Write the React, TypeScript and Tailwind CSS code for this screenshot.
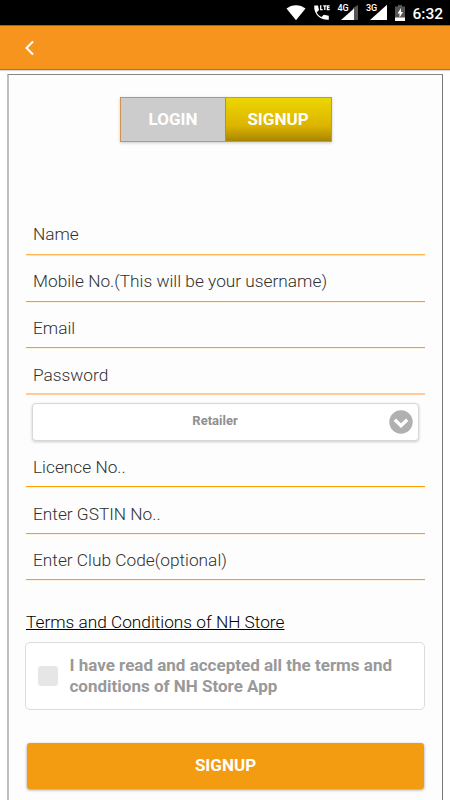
import React, { useState } from 'react';

interface Field {
  id: string;
  placeholder: string;
  type?: string;
  className: string;
}

const ACCOUNT_FIELDS: Field[] = [
  { id: 'name', placeholder: 'Name', className: 'h-[46px] pt-[4px] mb-px border-b border-[#ffb452] shadow-[0_1px_0_#ffe0b8]' },
  { id: 'mobile', placeholder: 'Mobile No.(This will be your username)', className: 'h-[46px] pt-[4px] border-b border-[#ffa000] shadow-[0_1px_0_#fff3e0]' },
  { id: 'email', placeholder: 'Email', className: 'h-[46px] pt-[6px] border-b border-[#ffa000] shadow-[0_1px_0_#fff3e0]' },
  { id: 'password', placeholder: 'Password', type: 'password', className: 'h-[47px] pt-[8px] border-b-2 border-[#ffcb9a]' },
];

const STORE_FIELDS: Field[] = [
  { id: 'licence', placeholder: 'Licence No..', className: 'h-[46px] pt-[6px] border-b border-[#ffa000] shadow-[0_1px_0_#fff3e0]' },
  { id: 'gstin', placeholder: 'Enter GSTIN No..', className: 'h-[47px] pt-[8px] border-b border-[#ffa000] shadow-[0_1px_0_#fff3e0]' },
  { id: 'club', placeholder: 'Enter Club Code(optional)', className: 'h-[46px] pt-[6px] border-b border-[#ffa000] shadow-[0_1px_0_#fff3e0]' },
];

const StatusBar = () => (
  <div className="h-[25px] bg-black shrink-0">
    <svg width="450" height="25" viewBox="0 0 450 25" fill="white">
      {/* Wifi */}
      <path d="M296 20.300 L286.500 8.600 C292 4 300 4 305.500 8.600 Z" />
      {/* LTE call */}
      <path d="M314.300 5.500 h3.700 l1 4.600 -2.300 2.300 c1.200 2.200 2.700 3.600 4.800 4.700 l2.300 -2.300 5 1 v4 c-8.500 .6 -15.500 -6 -14.500 -14.300z" />
      <path d="M320.700 5.300 v4.300 h2 M323.200 5.800 h3.200 M324.800 5.800 v4.200 M329.700 5.800 h-2.300 v3.800 h2.300 M327.400 7.700 h2" fill="none" stroke="white" strokeWidth="1.300" />
      {/* 4G */}
      <path d="M358 5 V20 H353 V8z" fill="#555" />
      <path d="M354 8.400 V20 H341 Z" />
      <text x="337.500" y="11" fontSize="9" fontWeight="500" fontFamily="Roboto" stroke="black" strokeWidth="2" paintOrder="stroke">4G</text>
      {/* 3G */}
      <path d="M387 4.800 V20 H370 Z" />
      <text x="366" y="11" fontSize="9" fontWeight="500" fontFamily="Roboto" stroke="black" strokeWidth="2" paintOrder="stroke">3G</text>
      {/* Battery */}
      <path d="M398 5 h4 v1.500 h3 V20.500 H395 V6.500 h3z" fill="#555" />
      <path d="M395 17.500 h10 v3.500 h-10z" />
      <path d="M401 8 l-3.500 5.500 h2 v4 l3.500 -5.500 h-2z" />
      <text x="412.500" y="19" fontSize="15.500" fontWeight="500" fontFamily="Roboto">6:32</text>
    </svg>
  </div>
);

const Fields: React.FC<{ items: Field[] }> = ({ items }) => (
  <>
    {items.map(f => (
      <input
        key={f.id}
        type={f.type || 'text'}
        placeholder={f.placeholder}
        className={`block w-full px-[7px] text-[17.3px] font-light text-black placeholder:text-[#303030] outline-none ${f.className}`}
      />
    ))}
  </>
);

export default function App() {
  const [accepted, setAccepted] = useState(false);

  return (
    <div className="w-[450px] h-[800px] overflow-hidden flex flex-col bg-white font-['Roboto',sans-serif]">
      <StatusBar />

      {/* Header */}
      <header className="h-[45px] shrink-0 bg-[#f7941e] border-t border-t-[#a8651a] border-b border-b-[#a9753b] flex items-center pl-[24px] shadow-[0_1px_1px_rgba(0,0,0,0.15)]">
        <button aria-label="Back">
          <svg width="12" height="16" viewBox="0 0 12 16" fill="none" stroke="white" strokeWidth="2">
            <path d="M9 1.500 L2.500 8 L9 14.500" />
          </svg>
        </button>
      </header>

      <main className="mt-[4px] ml-[7px] mr-[7px] h-[740px] shrink-0 border-t border-t-[#858585] border-l-2 border-l-[#c0c0c0] border-r border-r-[#777] bg-[#fdfdfd] pl-[17px] pr-[17px]">
        {/* Tabs */}
        <div className="mt-[22px] mx-auto w-[212px] h-[45px] flex border border-[#d0914f] shadow-[0_1px_3px_rgba(0,0,0,0.2)] text-[17px] font-bold text-white">
          <button className="w-[104px] bg-[#ccc] pl-px">LOGIN</button>
          <button className="flex-1 border-l border-[#bf8a30] bg-[linear-gradient(#ecd600_0%,#dcb400_65%,#a88600_100%)]">SIGNUP</button>
        </div>

        <div className="mt-[67px]">
          <Fields items={ACCOUNT_FIELDS} />

          {/* Account type */}
          <button className="mt-[8px] ml-[6px] w-[387px] h-[38px] flex items-center rounded-[4px] border border-[#d8d8d8] bg-white shadow-[0_1px_3px_rgba(0,0,0,0.2)] pr-[5px]">
            <span className="flex-1 pl-[8px] pb-[3px] text-center text-[13px] font-bold text-[#8f8f8f]">Retailer</span>
            <svg width="24" height="24" viewBox="0 0 24 24">
              <circle cx="12" cy="12" r="11.700" fill="#b0b0b0" />
              <path d="M5.800 9.700 L12 15.700 L18.200 9.700" fill="none" stroke="white" strokeWidth="3.300" />
            </svg>
          </button>

          <Fields items={STORE_FIELDS} />
        </div>

        <a className="block mt-[30px] h-[24px] leading-[24px] text-[17.25px] font-light text-black underline">Terms and Conditions of NH Store</a>

        <label className="mt-[8px] -ml-px h-[68px] flex items-center rounded-[5px] border border-[#dcdcdc] bg-white pl-[12px]">
          <input type="checkbox" className="sr-only" checked={accepted} onChange={() => setAccepted(!accepted)} />
          <span className={`size-[20px] shrink-0 rounded-[3px] ${accepted ? 'bg-[#f39c12]' : 'bg-[#e6e6e6]'}`} />
          <span className="ml-[11.5px] w-[340px] text-[17px] leading-[21px] font-bold text-[#999]">
            I have read and accepted all the terms and conditions of NH Store App
          </span>
        </label>

        <button className="mt-[33px] ml-px w-[397px] h-[46px] rounded-[3px] bg-[#f39c12] text-[17px] font-bold text-white shadow-[0_1px_3px_rgba(0,0,0,0.4)]">
          SIGNUP
        </button>
      </main>
    </div>
  );
}
